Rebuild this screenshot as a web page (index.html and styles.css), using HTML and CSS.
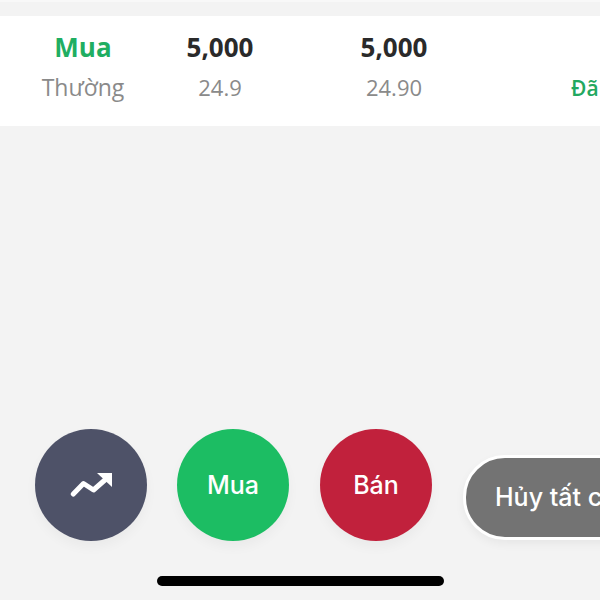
FILE: index.html
```html
<html>
    <head>
        <title>Lenh</title>
        <link rel="stylesheet" href="styles.css">
    </head>
    <body>
        <div class="screen">
            <div class="top_strip"></div>
            <div class="order_row">
                <div class="col col_side">
                    <div class="side_buy">Mua</div>
                    <div class="sub sub_type">Thường</div>
                </div>
                <div class="col col_qty">
                    <div class="qty">5,000</div>
                    <div class="sub">24.9</div>
                </div>
                <div class="col col_match">
                    <div class="qty">5,000</div>
                    <div class="sub">24.90</div>
                </div>
                <div class="col_status">Đã khớp</div>
            </div>
            <div class="spacer"></div>
            <div class="actions">
                <div class="round_btn btn_chart">
                    <svg class="chart_icon" width="42" height="24" viewBox="0 0 42 24">
                        <polyline points="3.3,21 13.5,10.5 23.5,17 36,6" fill="none" stroke="#fff" stroke-width="5" stroke-linecap="round" stroke-linejoin="round"/>
                        <polygon points="27,0 42,0 42,14" fill="#fff"/>
                    </svg>
                </div>
                <div class="round_btn btn_buy">Mua</div>
                <div class="round_btn btn_sell">Bán</div>
                <div class="cancel_btn">Hủy tất cả</div>
            </div>
            <div class="home_bar"></div>
        </div>
    </body>
</html>
```

FILE: styles.css
```css
html, body {
    margin: 0;
    padding: 0;
    background: #f3f3f3;
}
.screen {
    width: 600px;
    height: 600px;
    overflow: hidden;
    display: flex;
    flex-direction: column;
    background: #f3f3f3;
}
.top_strip {
    height: 16px;
    flex: none;
    box-sizing: border-box;
    border-top: 2px solid #f8f8f8;
}
.order_row {
    height: 110px;
    flex: none;
    display: flex;
    background: #fff;
    font-family: "Open Sans", sans-serif;
    white-space: nowrap;
}
.col {
    flex: none;
    box-sizing: border-box;
    padding-top: 14px;
    text-align: center;
}
.col_side {
    width: 166px;
}
.col_qty {
    width: 108px;
}
.col_match {
    width: 240px;
}
.col_status {
    flex: none;
    padding: 58px 0 0 57px;
    font-size: 21px;
    line-height: 29px;
    font-weight: 600;
    color: #22a860;
}
.side_buy {
    font-size: 26px;
    line-height: 34px;
    font-weight: 700;
    color: #1fae62;
}
.qty {
    font-size: 26px;
    line-height: 34px;
    font-weight: 700;
    color: #2a2a2a;
}
.sub {
    margin-top: 8px;
    font-size: 22px;
    line-height: 30px;
    color: #8a8a8a;
}
.sub_type {
    font-size: 23px;
}
.spacer {
    flex: 1;
}
.actions {
    display: flex;
    align-items: flex-end;
    padding-left: 35px;
    font-family: Inter, sans-serif;
    color: #fff;
    white-space: nowrap;
}
.round_btn {
    width: 112px;
    height: 112px;
    flex: none;
    margin-right: 31px;
    border-radius: 50%;
    display: flex;
    align-items: center;
    justify-content: center;
    font-size: 25px;
    font-weight: 500;
    box-shadow: 0 6px 12px rgba(0, 0, 0, 0.04);
}
.btn_chart {
    margin-right: 30px;
    background: #4e5268;
}
.btn_buy {
    background: #1cbd63;
}
.btn_sell {
    background: #c1213c;
}
.cancel_btn {
    flex: none;
    box-sizing: border-box;
    height: 85px;
    margin: 0 0 1px 0;
    padding: 0 29px;
    border: 3px solid #fff;
    border-radius: 42px;
    background: #737373;
    font-size: 25px;
    font-weight: 500;
    line-height: 79px;
    box-shadow: 0 4px 10px rgba(0, 0, 0, 0.05);
}
.home_bar {
    width: 287px;
    height: 10px;
    flex: none;
    margin: 35px 0 14px 157px;
    border-radius: 5px;
    background: #000;
}
```
